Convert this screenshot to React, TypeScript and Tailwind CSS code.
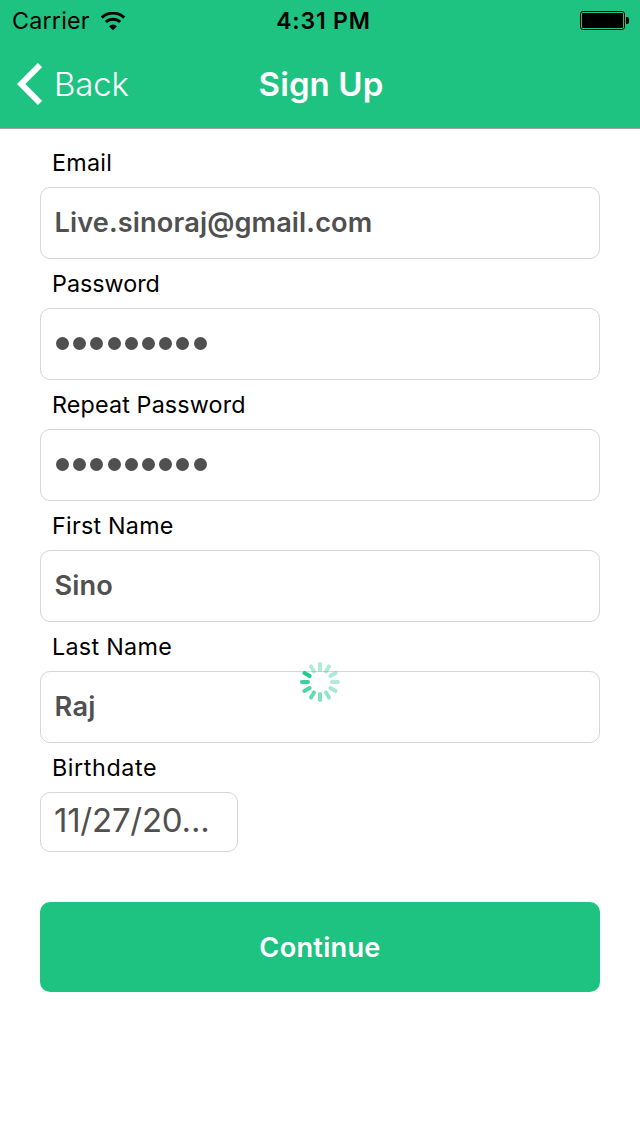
import React from "react";

const spokes = [0.35, 0.35, 0.35, 0.35, 0.4, 0.48, 0.57, 0.68, 0.79, 0.88, 1, 0.35];

type FieldProps = {
  label: string;
  labelClass: string;
  value?: string;
  valueClass?: string;
};

function Field({ label, labelClass, value, valueClass = "" }: FieldProps) {
  return (
    <div className="h-[121px]">
      <div className={`h-[49px] pt-[10px] pl-3 text-[23.3px] leading-[30px] text-black ${labelClass}`}>{label}</div>
      <div className="flex h-[72px] items-center rounded-[10px] border border-[#d6d6d6] pb-[2px] pl-[13px] text-[27.2px] font-semibold text-[#505050]">
        {value ? (
          <span className={`pt-[2px] pl-[0.5px] ${valueClass}`}>{value}</span>
        ) : (
          <span className="flex gap-[4.2px] pl-[2px]">
            {Array.from({ length: 9 }, (_, i) => (
              <span key={i} className="size-[13px] rounded-full bg-[#505050]" />
            ))}
          </span>
        )}
      </div>
    </div>
  );
}

function Wifi() {
  return (
    <svg width="26" height="19" viewBox="0 0 26 19" fill="none" stroke="black" strokeWidth="3">
      <path d="M1.8 5.6A16 16 0 0 1 24.2 5.6" />
      <path d="M5.9 10A10.3 10.3 0 0 1 20.1 10" />
      <path d="M13 18.2L9.1 14.2A5.6 5.6 0 0 1 16.9 14.2Z" fill="black" stroke="none" />
    </svg>
  );
}

function Battery() {
  return (
    <svg width="50" height="20" viewBox="0 0 50 20">
      <rect x="0.5" y="0.5" width="44" height="18" rx="2.5" fill="none" stroke="black" />
      <rect x="2" y="2" width="41" height="15" rx="1" />
      <path d="M46 6h1a2 2 0 0 1 2 2v3a2 2 0 0 1-2 2h-1z" />
    </svg>
  );
}

export default function App() {
  return (
    <div className="relative h-[1136px] w-[640px] bg-white font-['Inter',sans-serif]">
      <header className="h-[129px] border-b border-[#a0a5a3] bg-[#1ec382]">
        <div className="grid h-10 grid-cols-3 items-center text-black">
          <div className="flex items-center gap-[9px] pt-[2px] pl-3 text-[23.3px]">
            <span className="w-[79px] tracking-[0.2px]">Carrier</span>
            <Wifi />
          </div>
          <div className="pt-[2px] pl-[7px] text-center text-[23px] font-semibold tracking-[0.8px]">4:31 PM</div>
          <div className="flex justify-end pt-[2px] pr-[10px]">
            <Battery />
          </div>
        </div>
        <div className="grid h-[88px] grid-cols-3 items-center text-white">
          <div className="flex items-center gap-[12px] pl-[15px] text-[33px]">
            <svg width="27" height="44" viewBox="0 0 27 44" fill="none" stroke="white" strokeWidth="6">
              <path d="M25 3L6.2 22L25 41" />
            </svg>
            <span className="pt-[2px] font-light tracking-[-0.2px]">Back</span>
          </div>
          <div className="pt-[2px] pl-[2px] text-center text-[33px] font-semibold tracking-[0.1px]">Sign Up</div>
          <div />
        </div>
      </header>
      <main className="px-10 pt-[9px]">
        <Field label="Email" labelClass="tracking-[0.25px]" value="Live.sinoraj@gmail.com" valueClass="tracking-[0.12px]" />
        <Field label="Password" labelClass="tracking-[0px]" />
        <Field label="Repeat Password" labelClass="tracking-[0.15px]" />
        <Field label="First Name" labelClass="tracking-[0.24px]" value="Sino" valueClass="tracking-[0.1px]" />
        <Field label="Last Name" labelClass="tracking-[0.3px]" value="Raj" valueClass="tracking-[0.3px]" />
        <div className="h-[49px] pt-[10px] pl-3 text-[23.3px] leading-[30px] tracking-[0.6px]">Birthdate</div>
        <div className="flex h-[60px] w-[198px] items-center rounded-[10px] border border-[#d6d6d6] pb-[2px] pl-[13px] text-[33px] tracking-[-0.24px] text-[#505050]">
          11/27/20...
        </div>
        <button className="mt-[50px] flex h-[90px] w-full items-center justify-center rounded-[10px] bg-[#1ec382] pt-[2px] text-[27.2px] font-semibold tracking-[0.25px] text-white">
          Continue
        </button>
      </main>
      <svg className="absolute top-[662px] left-[300px]" width="40" height="40" viewBox="-20 -20 40 40" stroke="#1ecb8a" strokeWidth="4" strokeLinecap="round">
        {spokes.map((opacity, i) => (
          <path key={i} d="M0-12V-18" opacity={opacity} transform={`rotate(${i * 30})`} />
        ))}
      </svg>
    </div>
  );
}
